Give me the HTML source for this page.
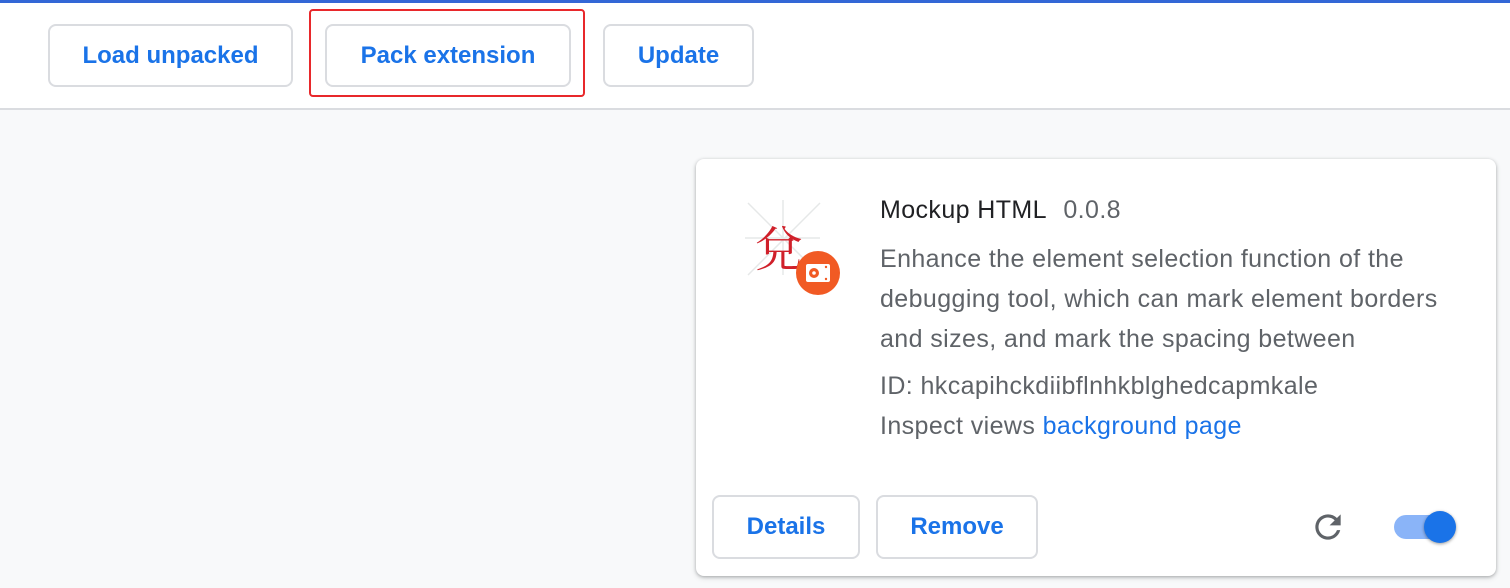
<!DOCTYPE html>
<html><head><style>
body{margin:0;width:1510px;height:588px;overflow:hidden;background:#f8f9fa;font-family:"Liberation Sans",Arial,sans-serif;position:relative}
.top{position:absolute;left:0;top:0;width:1510px;height:3px;background:#3367d6}
.hdr{position:absolute;left:0;top:3px;width:1510px;height:105px;background:#fff;border-bottom:2px solid #dadce0}
.btn{position:absolute;box-sizing:border-box;border:2px solid #dadce0;border-radius:8px;background:#fff;color:#1a73e8;font-size:24px;font-weight:bold;display:flex;align-items:center;justify-content:center}
.red{position:absolute;left:309px;top:9px;width:276px;height:88px;box-sizing:border-box;border:2px solid #e8282b;border-radius:4px}
.card{position:absolute;left:696px;top:159px;width:800px;height:417px;background:#fff;border-radius:8px;box-shadow:0 1px 3px rgba(60,64,67,.35),0 2px 6px rgba(60,64,67,.15)}
.t{position:absolute;left:880px;font-size:25px;letter-spacing:0.4px;color:#5f6368;white-space:nowrap}
</style></head><body>
<div class="top"></div>
<div class="hdr"></div>
<div class="btn" style="left:48px;top:24px;width:245px;height:63px">Load unpacked</div>
<div class="btn" style="left:325px;top:24px;width:246px;height:63px">Pack extension</div>
<div class="red"></div>
<div class="btn" style="left:603px;top:24px;width:151px;height:63px">Update</div>
<div class="card"></div>
<svg style="position:absolute;left:745px;top:200px" width="100" height="100">
<g stroke="#e6e8e8" stroke-width="1.5"><line x1="3" y1="3" x2="75" y2="75"/><line x1="75" y1="3" x2="3" y2="75"/><line x1="0" y1="38" x2="75" y2="38"/><line x1="38" y1="0" x2="38" y2="75"/></g>
<text x="10" y="66" font-size="48" fill="#d0202a" font-family="Noto Serif CJK SC,serif">兌</text>
<circle cx="73" cy="73" r="22" fill="#f15a24"/>
<rect x="61" y="64" width="24" height="18" rx="2" fill="#fff"/>
<circle cx="69" cy="73" r="5" fill="#f15a24"/><circle cx="69" cy="73" r="1.8" fill="#fff"/>
<circle cx="81" cy="67" r="1.2" fill="#f15a24"/><circle cx="81" cy="79" r="1.2" fill="#f15a24"/>
</svg>
<div class="t" style="top:196px;color:#202124">Mockup HTML <span style="color:#5f6368;margin-left:10px">0.0.8</span></div>
<div class="t" style="top:239px;line-height:40px">Enhance the element selection function of the<br>debugging tool, which can mark element borders<br>and sizes, and mark the spacing between</div>
<div class="t" style="top:372px">ID: hkcapihckdiibflnhkblghedcapmkale</div>
<div class="t" style="top:412px">Inspect views <span style="color:#1a73e8">background page</span></div>
<div class="btn" style="left:712px;top:495px;width:148px;height:64px">Details</div>
<div class="btn" style="left:876px;top:495px;width:162px;height:64px">Remove</div>
<svg style="position:absolute;left:1309px;top:508px" width="38" height="38" viewBox="0 0 24 24"><path fill="#5f6368" d="M17.65 6.35A7.96 7.96 0 0 0 12 4a8 8 0 1 0 7.73 10h-2.08A6 6 0 1 1 12 6c1.66 0 3.14.69 4.22 1.78L13 11h7V4l-2.35 2.35z"/></svg>
<div style="position:absolute;left:1394px;top:515px;width:54px;height:24px;border-radius:12px;background:#8ab4f8"></div>
<div style="position:absolute;left:1424px;top:511px;width:32px;height:32px;border-radius:50%;background:#1a73e8;box-shadow:0 1px 3px rgba(0,0,0,.4)"></div>
</body></html>
